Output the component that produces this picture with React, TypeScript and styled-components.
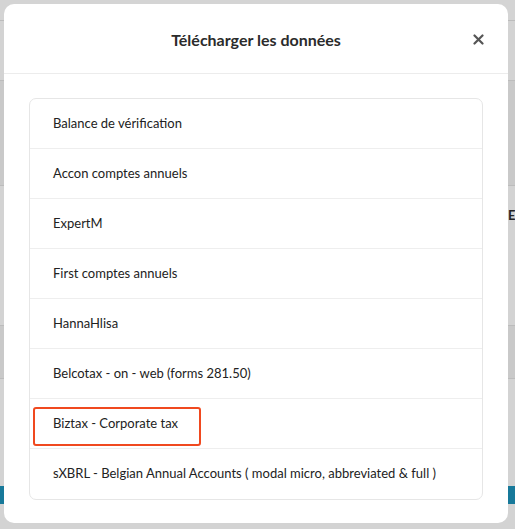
import React from "react";
import styled, { createGlobalStyle } from "styled-components";

const GlobalStyle = createGlobalStyle`
  html, body { margin: 0; padding: 0; }
  body {
    width: 515px;
    height: 529px;
    overflow: hidden;
    font-family: Lato, "Open Sans", "Liberation Sans", sans-serif;
    -webkit-font-smoothing: antialiased;
  }
`;

const Page = styled.div`
  position: relative;
  width: 515px;
  height: 529px;
  overflow: hidden;
  background: #d3d3d3;
`;

const Backdrop = styled.div`
  display: flex;
  flex-direction: column;
  height: 100%;
`;

const Band = styled.div<{ $h: number; $bg: string; $line?: boolean }>`
  height: ${(p) => p.$h}px;
  background: ${(p) => p.$bg};
  border-bottom: ${(p) => (p.$line ? "1px solid #bcbcbc" : "none")};
  box-sizing: border-box;
  display: flex;
  justify-content: flex-end;
  align-items: flex-start;
`;

const BgLetter = styled.span`
  font-weight: 700;
  font-size: 13px;
  color: #222;
  margin-top: 21px;
  width: 7px;
  overflow: hidden;
`;

const Modal = styled.div`
  position: absolute;
  left: 4px;
  top: 4px;
  width: 504px;
  height: 519px;
  background: #fff;
  border-radius: 10px;
  display: flex;
  flex-direction: column;
  box-sizing: border-box;
`;

const Header = styled.div`
  position: relative;
  height: 70px;
  flex: none;
  border-bottom: 1px solid #ececec;
  display: flex;
  align-items: center;
  justify-content: center;
  box-sizing: border-box;
`;

const Title = styled.h2`
  margin: 0;
  margin-top: 1px;
  font-size: 16px;
  font-weight: 700;
  color: #2b2b2b;
`;

const Close = styled.button`
  position: absolute;
  right: 24px;
  top: 29px;
  width: 12px;
  height: 12px;
  padding: 0;
  border: 0;
  background: none;
  display: flex;
  align-items: center;
  justify-content: center;
`;

const Body = styled.div`
  padding: 24px 24px 0 25px;
`;

const List = styled.ul`
  list-style: none;
  margin: 0;
  padding: 0;
  border: 1px solid #e6e6e6;
  border-radius: 7px;
  width: 454px;
  box-sizing: border-box;
`;

const Item = styled.li<{ $last?: boolean }>`
  position: relative;
  height: 50px;
  box-sizing: border-box;
  border-bottom: ${(p) => (p.$last ? "none" : "1px solid #eeeeee")};
  display: flex;
  align-items: center;
  padding-left: 23px;
  padding-bottom: 2px;
  font-size: 13px;
  color: #222;
`;

const Highlight = styled.span`
  position: absolute;
  left: 3px;
  top: 8px;
  width: 168px;
  height: 39px;
  border: 2px solid #f0491f;
  border-radius: 3px;
  box-sizing: border-box;
`;

const items = [
  "Balance de vérification",
  "Accon comptes annuels",
  "ExpertM",
  "First comptes annuels",
  "HannaHlisa",
  "Belcotax - on - web (forms 281.50)",
  "Biztax - Corporate tax",
  "sXBRL - Belgian Annual Accounts ( modal micro, abbreviated & full )",
];

export default function App() {
  return (
    <>
      <GlobalStyle />
      <Page>
        <Backdrop>
          <Band $h={21} $bg="#d4d4d4" $line />
          <Band $h={60} $bg="#d3d3d3" $line />
          <Band $h={105} $bg="#c9c9c9" $line />
          <Band $h={140} $bg="#d3d3d3" $line>
            <BgLetter>E</BgLetter>
          </Band>
          <Band $h={53} $bg="#c9c9c9" $line />
          <Band $h={107} $bg="#d3d3d3" />
          <Band $h={18} $bg="#17799a" />
          <Band $h={25} $bg="#d3d3d3" />
        </Backdrop>
        <Modal>
          <Header>
            <Title>Télécharger les données</Title>
            <Close aria-label="Fermer">
              <svg width="11" height="11" viewBox="0 0 11 11">
                <path
                  d="M1.5 1.5 L9.5 9.5 M9.5 1.5 L1.5 9.5"
                  stroke="#555"
                  strokeWidth="2.2"
                  strokeLinecap="round"
                />
              </svg>
            </Close>
          </Header>
          <Body>
            <List>
              {items.map((t, i) => (
                <Item key={t} $last={i === items.length - 1}>
                  {t}
                  {i === 6 && <Highlight />}
                </Item>
              ))}
            </List>
          </Body>
        </Modal>
      </Page>
    </>
  );
}
